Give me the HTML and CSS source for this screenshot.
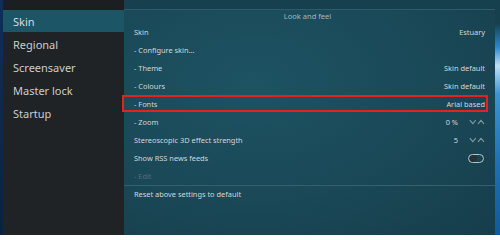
FILE: index.html
```html
<!DOCTYPE html>
<html>
<head>
<meta charset="utf-8">
<link rel="stylesheet" href="styles.css">
</head>
<body>
<div class="screen">
  <div class="desk-left"></div>
  <nav class="side">
    <div class="side-top"></div>
    <div class="side-item active">Skin</div>
    <div class="side-item">Regional</div>
    <div class="side-item">Screensaver</div>
    <div class="side-item">Master lock</div>
    <div class="side-item">Startup</div>
  </nav>
  <main class="panel">
    <div class="panel-top"></div>
    <div class="group-title">Look and feel</div>
    <div class="rows">
      <div class="row"><span>Skin</span><span class="val">Estuary</span></div>
      <div class="row"><span>- Configure skin...</span></div>
      <div class="row"><span>- Theme</span><span class="val">Skin default</span></div>
      <div class="row"><span>- Colours</span><span class="val">Skin default</span></div>
      <div class="row focus"><span>- Fonts</span><span class="val">Arial based</span></div>
      <div class="row"><span>- Zoom</span><span class="val">0 %<svg class="spin" width="16" height="6" viewBox="0 0 16 6"><path d="M0.8 1.2 L3.8 4.6 L6.8 1.2 M9 4.8 L12 1.4 L15 4.8" fill="none" stroke="#8797a0" stroke-width="1.1"/></svg></span></div>
      <div class="row"><span>Stereoscopic 3D effect strength</span><span class="val">5<svg class="spin" width="16" height="6" viewBox="0 0 16 6"><path d="M0.8 1.2 L3.8 4.6 L6.8 1.2 M9 4.8 L12 1.4 L15 4.8" fill="none" stroke="#8797a0" stroke-width="1.1"/></svg></span></div>
      <div class="row"><span>Show RSS news feeds</span><span class="val"><span class="toggle"><span class="knob"></span></span></span></div>
      <div class="row dim"><span>- Edit</span></div>
    </div>
    <div class="sep"></div>
    <div class="row reset"><span>Reset above settings to default</span></div>
  </main>
  <div class="desk-right"></div>
</div>
</body>
</html>
```
FILE: styles.css
```css
html, body {
  margin: 0;
  padding: 0;
}
body {
  width: 500px;
  height: 235px;
  overflow: hidden;
  font-family: "Noto Sans", "DejaVu Sans", sans-serif;
}
.screen {
  display: flex;
  width: 500px;
  height: 235px;
}
.desk-left {
  width: 3px;
  background: linear-gradient(180deg, #0d2f58, #0a2850 60%, #082245);
}
.side {
  width: 121px;
  background: #1f2326;
  display: flex;
  flex-direction: column;
}
.side-top {
  height: 10px;
  background: #1b1f22;
}
.side-item {
  height: 23px;
  box-sizing: border-box;
  padding-left: 10px;
  display: flex;
  align-items: center;
  font-size: 11px;
  color: #c9cdcf;
}
.side-item.active {
  height: 22px;
  margin-bottom: 1px;
  background: #1c5566;
  color: #d8dcde;
}
.panel {
  width: 371px;
  display: flex;
  flex-direction: column;
  background: radial-gradient(ellipse at 35% 35%, #1d5363 0%, #1a4857 55%, #163d4b 100%);
}
.panel-top {
  height: 9px;
  background: #17404e;
  border-bottom: 1px solid #2c5c6b;
}
.group-title {
  height: 13px;
  line-height: 12px;
  font-size: 7.5px;
  color: #a9b6bb;
  text-align: center;
  padding-right: 4px;
  margin-bottom: 1px;
}
.rows {
  display: flex;
  flex-direction: column;
  margin-top: -1px;
}
.row {
  height: 18px;
  box-sizing: border-box;
  display: flex;
  align-items: center;
  justify-content: space-between;
  padding: 0 10px 0 10px;
  font-size: 7.4px;
  color: #d2d6d8;
}
.row.focus {
  height: 17px;
  margin: 0 7px 1px -2px;
  padding: 0 1px 0 10px;
  border: 2px solid #e2231e;
}
.row.dim {
  color: #4f6f7a;
}
.row.reset {
  height: 16px;
}
.val {
  display: flex;
  align-items: center;
}
.spin {
  margin-left: 11px;
}
.toggle {
  width: 12px;
  height: 7px;
  border: 1.2px solid #b9c1c4;
  border-radius: 5px;
  display: flex;
  align-items: center;
  padding: 0 1px;
  box-sizing: content-box;
  margin-right: 1px;
}
.knob {
  width: 7px;
  height: 7px;
  border-radius: 50%;
  background: #263236;
}
.sep {
  height: 1px;
  background: #35606e;
}
.desk-right {
  width: 5px;
  background: linear-gradient(180deg, #17404e 0%, #17404e 10%, #2a86cf 20%, #bfe0f5 28%, #3a94d6 40%, #1c6fb8 70%, #0f5aa0 100%);
}
```
